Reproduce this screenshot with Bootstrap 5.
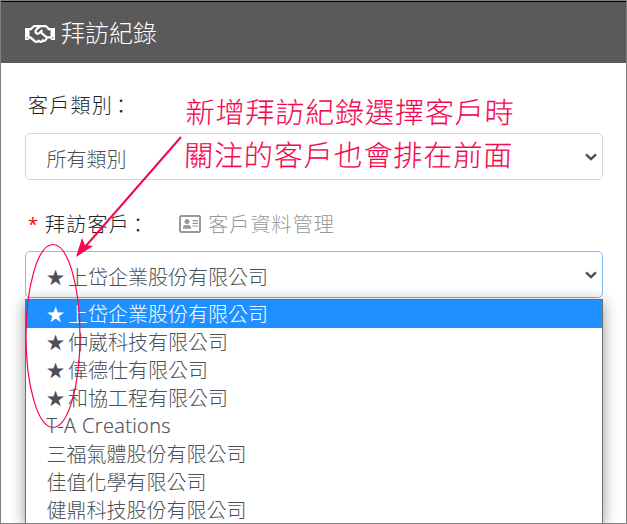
<!DOCTYPE html>
<html lang="zh-Hant">
<head>
<meta charset="utf-8">
<meta name="viewport" content="width=device-width, initial-scale=1">
<title>拜訪紀錄</title>
<link href="https://cdn.jsdelivr.net/npm/bootstrap@5.3.0/dist/css/bootstrap.min.css" rel="stylesheet">
<style>
body{font-family:"Noto Sans CJK TC","Noto Sans",sans-serif;font-weight:300;font-size:20px;line-height:28px;color:#495057}
.page-frame{height:524px;border:1px solid #808080}
.page-head{height:62px;background:#5a5a5a;border-top:1px solid #000;font-size:24px;padding:3px 0 0 24px;gap:6px}
.page-head span{margin-top:-4px}
.form-area{padding:0 23px 0 24px}
.label-row{height:70px;padding:14px 0 0 3px;color:#212529}
.label-second{height:71px;padding-top:16px}
.label-text{letter-spacing:1.25px}
.colon{position:relative;left:-2px;top:1px}
.pick{height:47px;border:1px solid #d3d5d8;border-radius:5px;padding:4px 5px 0 20.5px}
.pick-open{border-color:#80bdff}
.pick svg{margin-top:-4px}
.option-list{margin:1px 0 0;height:224px;border:1px solid #6b6d70;border-top-color:#77706a;border-bottom:0;box-shadow:0 3px 14px rgba(0,0,0,.42);background:#fff}
.option-item{height:28px;padding-left:20.5px;line-height:28px;white-space:nowrap}
.option-item.chosen{background:#1e90ff;color:#fff}
.star{display:inline-block;width:21.5px;font-family:"DejaVu Sans",sans-serif;font-size:19px;line-height:20px;text-indent:-1px;position:relative;top:-1px}
.latin{font-family:"Open Sans",sans-serif;font-weight:300;font-size:20px;letter-spacing:.35px;-webkit-text-stroke:.2px #495057}
.manage{color:#999;margin-left:28px;gap:7px;letter-spacing:1.1px}
.must{color:red;width:17px;font-family:"Open Sans",sans-serif;font-weight:400;font-size:18px}
.note{left:184px;top:88px;color:#f5064f;font-size:29px;letter-spacing:.9px;line-height:42.5px;white-space:nowrap;-webkit-text-stroke:.1px #f5064f;transform:skewX(-2deg)}
</style>
</head>
<body>
<div class="page-frame position-relative overflow-hidden bg-white">
  <header class="page-head d-flex align-items-center text-white">
    <svg width="30" height="24" viewBox="0 0 640 512" fill="currentColor"><path d="M519.2 127.9l-47.6-47.6A56.252 56.252 0 0 0 432 64H205.2c-14.8 0-29.1 5.9-39.6 16.3L118 127.9H0v255.7h64c17.6 0 31.8-14.2 31.9-31.7h9.1l84.6 76.4c30.9 25.1 73.8 25.7 105.6 3.8 12.5 10.8 26 15.9 41.1 15.9 18.2 0 35.3-7.4 48.8-24 22.1 8.7 48.2 2.6 64-16.8l26.2-32.3c5.6-6.9 9.1-14.8 10.9-23h57.9c.1 17.5 14.4 31.7 31.9 31.7h64V127.9H519.2zM48 351.6c-8.8 0-16-7.2-16-16s7.2-16 16-16 16 7.2 16 16c0 8.9-7.2 16-16 16zm390-6.9l-26.1 32.2c-2.8 3.4-7.8 4-11.3 1.2l-23.9-19.4-30 36.5c-6 7.3-15 4.8-18 2.4l-36.8-31.5-15.6 19.2c-13.9 17.1-39.2 19.7-55.3 6.6l-97.3-88H96V175.8h41.9l61.7-61.6c2-.8 3.7-1.5 5.7-2.3H262l-38.7 35.5c-29.4 26.9-31.1 72.3-4.4 101.3 14.8 16.2 61.2 41.2 101.5 4.4l8.2-7.5 108.2 87.8c3.4 2.8 3.9 7.9 1.2 11.3zm106-40.8h-69.2c-2.3-2.8-4.9-5.4-7.7-7.7l-102.7-83.4 12.5-11.4c6.5-6 7-16.1 1-22.6L367 167.1c-6-6.5-16.1-6.9-22.6-1l-55.2 50.6c-9.5 8.7-25.7 9.4-34.6 0-9.3-9.9-8.5-25.1 1.2-33.9l65.6-60.1c7.4-6.8 17-10.5 27-10.5l83.7-.2c2.1 0 4.1.8 5.5 2.3l61.7 61.6H544v128zm48 47.7c-8.8 0-16-7.2-16-16s7.2-16 16-16 16 7.2 16 16c0 8.9-7.2 16-16 16z"/></svg>
    <span>拜訪紀錄</span>
  </header>
  <main class="form-area">
    <div class="label-row d-flex align-items-center"><span class="label-text">客戶類別<span class="colon">：</span></span></div>
    <div class="pick d-flex justify-content-between align-items-center">
      <span>所有類別</span>
      <svg width="12" height="8" viewBox="0 0 12 8" fill="none" stroke="#495057" stroke-width="2.4"><path d="M1 1.3l5 4.8 5-4.8"/></svg>
    </div>
    <div class="label-row label-second d-flex align-items-center">
      <span class="must">*</span><span class="label-text">拜訪客戶<span class="colon">：</span></span>
      <span class="manage d-flex align-items-center">
        <svg width="22" height="18" viewBox="0 0 22 18" fill="#999"><rect x="1" y="1" width="20" height="16" rx="1.5" fill="none" stroke="#999" stroke-width="2"/><circle cx="8" cy="6.5" r="2.5"/><path d="M4 13.800v-1.300q0-2.500 2.500-2.500h3q2.500 0 2.500 2.500v1.300zM13.500 5H19v1.200h-5.500zM13.500 7.700H19v1.200h-5.500zM13.500 10.400H19v1.200h-5.500z"/></svg>
        <span>客戶資料管理</span>
      </span>
    </div>
    <div class="pick pick-open d-flex justify-content-between align-items-center">
      <span><span class="star">★</span>上岱企業股份有限公司</span>
      <svg width="12" height="8" viewBox="0 0 12 8" fill="none" stroke="#495057" stroke-width="2.4"><path d="M1 1.3l5 4.8 5-4.8"/></svg>
    </div>
    <div class="option-list">
      <div class="option-item chosen"><span class="star">★</span>上岱企業股份有限公司</div>
      <div class="option-item"><span class="star">★</span>仲崴科技有限公司</div>
      <div class="option-item"><span class="star">★</span>偉德仕有限公司</div>
      <div class="option-item"><span class="star">★</span>和協工程有限公司</div>
      <div class="option-item latin">T-A Creations</div>
      <div class="option-item">三福氣體股份有限公司</div>
      <div class="option-item">佳值化學有限公司</div>
      <div class="option-item">健鼎科技股份有限公司</div>
    </div>
  </main>
  <!-- Hand-drawn style callout over the form -->
  <svg class="position-absolute top-0 start-0" width="625" height="522" viewBox="1 1 625 522" fill="none" stroke="#f5064f"><ellipse cx="53" cy="336" rx="27" ry="91.5" stroke-width="1.2"/><path d="M181 137L85 247" stroke-width="2"/><path d="M76 257l6-19 3 7 8 1z" fill="#f5064f" stroke="none"/></svg>
  <div class="note position-absolute">新增拜訪紀錄選擇客戶時<br>關注的客戶也會排在前面</div>
</div>
<script src="https://cdn.jsdelivr.net/npm/bootstrap@5.3.0/dist/js/bootstrap.bundle.min.js"></script>
</body>
</html>
